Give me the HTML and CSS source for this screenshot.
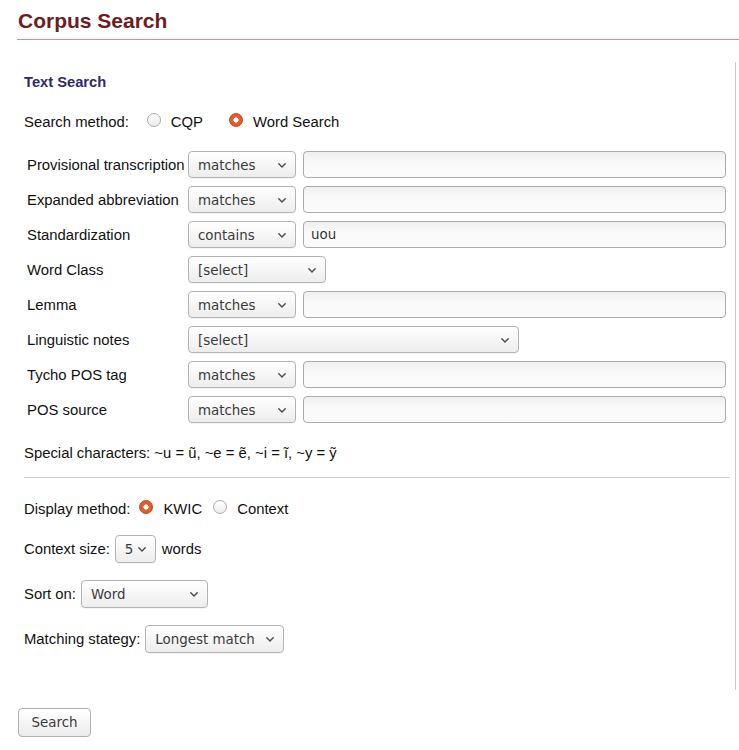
FILE: index.html
```html
<!DOCTYPE html>
<html>
<head>
<meta charset="utf-8">
<title>Corpus Search</title>
<link rel="stylesheet" href="styles.css">
</head>
<body>
<header class="page-head">
  <h1 class="page-title">Corpus Search</h1>
</header>

<div class="panel">
  <h2 class="panel-title">Text Search</h2>

  <div class="line method-line">
    <span class="lbl">Search method:</span>
    <span class="radio radio-cqp"></span><span class="opt">CQP</span>
    <span class="radio checked radio-ws"></span><span class="opt">Word Search</span>
  </div>

  <div class="fields">
    <span class="flabel">Provisional transcription</span>
    <div class="sel sel-op"><span>matches</span><svg class="chev" width="8" height="5" viewBox="0 0 8 5"><path d="M0.8 0.8 L4 4 L7.2 0.8"/></svg></div>
    <div class="txt"></div>

    <span class="flabel">Expanded abbreviation</span>
    <div class="sel sel-op"><span>matches</span><svg class="chev" width="8" height="5" viewBox="0 0 8 5"><path d="M0.8 0.8 L4 4 L7.2 0.8"/></svg></div>
    <div class="txt"></div>

    <span class="flabel">Standardization</span>
    <div class="sel sel-op"><span>contains</span><svg class="chev" width="8" height="5" viewBox="0 0 8 5"><path d="M0.8 0.8 L4 4 L7.2 0.8"/></svg></div>
    <div class="txt">uou</div>

    <span class="flabel">Word Class</span>
    <div class="span2"><div class="sel sel-wc"><span>[select]</span><svg class="chev" width="8" height="5" viewBox="0 0 8 5"><path d="M0.8 0.8 L4 4 L7.2 0.8"/></svg></div></div>

    <span class="flabel">Lemma</span>
    <div class="sel sel-op"><span>matches</span><svg class="chev" width="8" height="5" viewBox="0 0 8 5"><path d="M0.8 0.8 L4 4 L7.2 0.8"/></svg></div>
    <div class="txt"></div>

    <span class="flabel">Linguistic notes</span>
    <div class="span2"><div class="sel sel-ln"><span>[select]</span><svg class="chev" width="8" height="5" viewBox="0 0 8 5"><path d="M0.8 0.8 L4 4 L7.2 0.8"/></svg></div></div>

    <span class="flabel">Tycho POS tag</span>
    <div class="sel sel-op"><span>matches</span><svg class="chev" width="8" height="5" viewBox="0 0 8 5"><path d="M0.8 0.8 L4 4 L7.2 0.8"/></svg></div>
    <div class="txt"></div>

    <span class="flabel">POS source</span>
    <div class="sel sel-op"><span>matches</span><svg class="chev" width="8" height="5" viewBox="0 0 8 5"><path d="M0.8 0.8 L4 4 L7.2 0.8"/></svg></div>
    <div class="txt"></div>
  </div>

  <p class="line special">Special characters: ~u = ũ, ~e = ẽ, ~i = ĩ, ~y = ỹ</p>

  <hr class="sep">

  <div class="line display-line">
    <span class="lbl">Display method:</span>
    <span class="radio checked radio-kwic"></span><span class="opt">KWIC</span>
    <span class="radio radio-ctx"></span><span class="opt">Context</span>
  </div>

  <div class="ctl-line first">
    <span class="lbl">Context size:</span>
    <div class="sel sel-cs"><span>5</span><svg class="chev" width="8" height="5" viewBox="0 0 8 5"><path d="M0.8 0.8 L4 4 L7.2 0.8"/></svg></div>
    <span class="lbl after">words</span>
  </div>

  <div class="ctl-line">
    <span class="lbl">Sort on:</span>
    <div class="sel sel-sort"><span>Word</span><svg class="chev" width="8" height="5" viewBox="0 0 8 5"><path d="M0.8 0.8 L4 4 L7.2 0.8"/></svg></div>
  </div>

  <div class="ctl-line">
    <span class="lbl">Matching stategy:</span>
    <div class="sel sel-match"><span>Longest match</span><svg class="chev" width="8" height="5" viewBox="0 0 8 5"><path d="M0.8 0.8 L4 4 L7.2 0.8"/></svg></div>
  </div>
</div>

<div class="actions">
  <button class="btn" type="button">Search</button>
</div>
</body>
</html>
```
FILE: styles.css
```css
html, body {
  margin: 0;
  padding: 0;
  background: #fff;
}
body {
  font-family: "Liberation Sans", Arial, sans-serif;
  font-size: 14.85px;
  color: #111;
}

.page-head {
  margin-left: 17px;
  padding-top: 9px;
  padding-bottom: 6px;
  border-bottom: 1px solid #e08a88;
}
.page-title {
  margin: 0 0 0 1px;
  font-size: 21px;
  line-height: 24px;
  font-weight: bold;
  color: #6e1c22;
}

.panel {
  margin: 22px 0 0 17px;
  width: 719px;
  box-sizing: border-box;
  padding: 11px 5px 37px 7px;
  border-right: 1px solid #c9c9c9;
}
.panel-title {
  margin: 0;
  font-size: 14.7px;
  line-height: 18px;
  font-weight: bold;
  color: #2b2c6c;
}

.line {
  display: flex;
  align-items: center;
  height: 20px;
  line-height: 20px;
  margin: 0;
}
.method-line { margin-top: 21px; }

.radio {
  width: 14px;
  height: 14px;
  box-sizing: border-box;
  border-radius: 50%;
  border: 1px solid #a9a9a9;
  background: linear-gradient(#ffffff, #ececec);
  position: relative;
  top: -2px;
}
.radio.checked {
  border: 1px solid #c4481e;
  background: radial-gradient(circle at 50% 50%, #ffffff 0, #ffffff 2.3px, #e4612d 2.9px, #d9542a 100%);
}
.radio-cqp { margin-left: 18px; }
.radio-ws { margin-left: 26px; }
.radio-kwic { margin-left: 9px; }
.radio-ctx { margin-left: 11px; }
.opt { margin-left: 10px; }

.fields {
  margin-top: 19px;
  display: grid;
  grid-template-columns: 154px 108px 1fr;
  grid-auto-rows: 27px;
  column-gap: 7px;
  row-gap: 8px;
  padding: 0 4px 0 3px;
  align-items: center;
}
.flabel {
  white-space: nowrap;
}
.span2 {
  grid-column: 2 / span 2;
  display: flex;
}

.sel {
  height: 27px;
  box-sizing: border-box;
  border: 1px solid #b3b3b3;
  border-radius: 4px;
  background: linear-gradient(#ffffff, #ededed);
  display: flex;
  align-items: center;
  justify-content: space-between;
  padding: 1px 9px 0 9px;
  font-family: "DejaVu Sans", sans-serif;
  font-size: 13.4px;
  color: #3a3a3a;
  box-shadow: 0 1px 0 rgba(0,0,0,0.04);
}
.chev {
  flex: none;
  margin-top: 0;
}
.chev path {
  fill: none;
  stroke: #4a4a4a;
  stroke-width: 1.4;
  stroke-linecap: round;
  stroke-linejoin: round;
}
.sel-op { width: 108px; }
.sel-wc { width: 138px; }
.sel-ln { width: 331px; }

.txt {
  height: 27px;
  box-sizing: border-box;
  border: 1px solid #acacac;
  border-radius: 4px;
  background: linear-gradient(#efefef, #f9f9f9 40%, #fbfbfb);
  font-family: "DejaVu Sans", sans-serif;
  font-size: 13.4px;
  color: #333;
  line-height: 26px;
  padding: 0 7px;
}

.special { margin-top: 20px; }

.sep {
  margin: 14px 0 0 0;
  border: 0;
  border-top: 1px solid #d0d0d0;
  height: 0;
}

.display-line { margin-top: 21px; }

.ctl-line {
  display: flex;
  align-items: center;
  margin-top: 17px;
}
.ctl-line.first { margin-top: 16px; }
.ctl-line .sel { height: 28px; }
.ctl-line .lbl { margin-right: 5px; }
.ctl-line .lbl.after { margin-left: 6px; margin-right: 0; }
.sel-cs { width: 41px; }
.sel-sort { width: 127px; }
.sel-match { width: 139px; }

.actions {
  margin: 18px 0 0 18px;
}
.btn {
  width: 73px;
  height: 29px;
  border: 1px solid #b0b0b0;
  border-radius: 4px;
  background: linear-gradient(#ffffff, #ececec);
  font-family: "DejaVu Sans", sans-serif;
  font-size: 13.4px;
  color: #3a3a3a;
  padding: 0;
}
```
